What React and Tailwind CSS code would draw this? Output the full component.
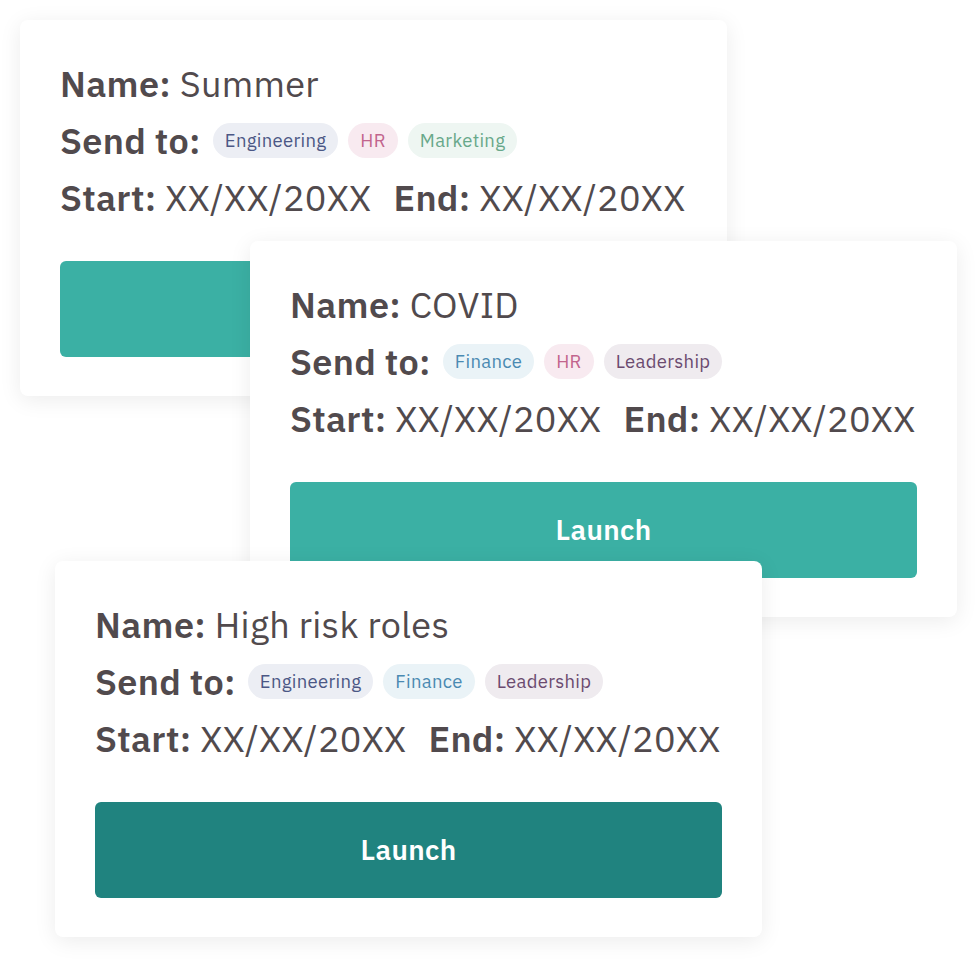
const tagStyles = {
  Engineering: 'bg-[#eceef4] text-[#4b5785]',
  HR: 'bg-[#f8eaf0] text-[#c2648d]',
  Marketing: 'bg-[#eef6f2] text-[#68a88a]',
  Finance: 'bg-[#eaf3f7] text-[#4a8ab2]',
  Leadership: 'bg-[#efebef] text-[#6b4a6f]',
};

const campaigns = [
  { name: 'Summer', tags: ['Engineering', 'HR', 'Marketing'], button: 'bg-[#3bb0a4]', wrap: 'ml-[20px] mt-[20px]', z: 'z-0' },
  { name: 'COVID', tags: ['Finance', 'HR', 'Leadership'], button: 'bg-[#3bb0a4]', wrap: 'ml-[250px] mt-[-155px]', z: 'z-10' },
  { name: 'High risk roles', tags: ['Engineering', 'Finance', 'Leadership'], button: 'bg-[#20837f]', wrap: 'ml-[55px] mt-[-56px]', z: 'z-20' },
];

function Tag({ label }) {
  return (
    <span className={`inline-flex h-[35px] items-center rounded-full px-3 text-[18.5px] tracking-[0.3px] ${tagStyles[label]}`}>
      {label}
    </span>
  );
}

function CampaignCard({ campaign }) {
  return (
    <div
      className={`relative ${campaign.z} ${campaign.wrap} w-[707px] h-[376px] rounded-lg bg-white px-10 pt-[35px] pb-[39px] shadow-[0_4px_22px_rgba(0,0,0,0.08)] flex flex-col`}
    >
      <div className="flex flex-col text-[36px] leading-[57px] tracking-[0.3px] text-[#514a4d]">
        <div>
          <span className="font-semibold">Name:</span> {campaign.name}
        </div>
        <div className="flex items-center gap-[10px]">
          <span className="font-semibold mr-[2px]">Send to:</span>
          {campaign.tags.map((t) => (
            <Tag key={t} label={t} />
          ))}
        </div>
        <div className="flex gap-[22px]">
          <span>
            <span className="font-semibold">Start:</span> XX/XX/20XX
          </span>
          <span>
            <span className="font-semibold">End:</span> XX/XX/20XX
          </span>
        </div>
      </div>
      <button className={`mt-auto h-[96px] w-full rounded-md ${campaign.button} text-[28px] font-semibold tracking-[0.3px] text-white`}>
        Launch
      </button>
    </div>
  );
}

export default function App() {
  return (
    <div className="w-[975px] h-[975px] bg-white flex flex-col" style={{ fontFamily: '"IBM Plex Sans", "Noto Sans", sans-serif' }}>
      {campaigns.map((c) => (
        <CampaignCard key={c.name} campaign={c} />
      ))}
    </div>
  );
}
